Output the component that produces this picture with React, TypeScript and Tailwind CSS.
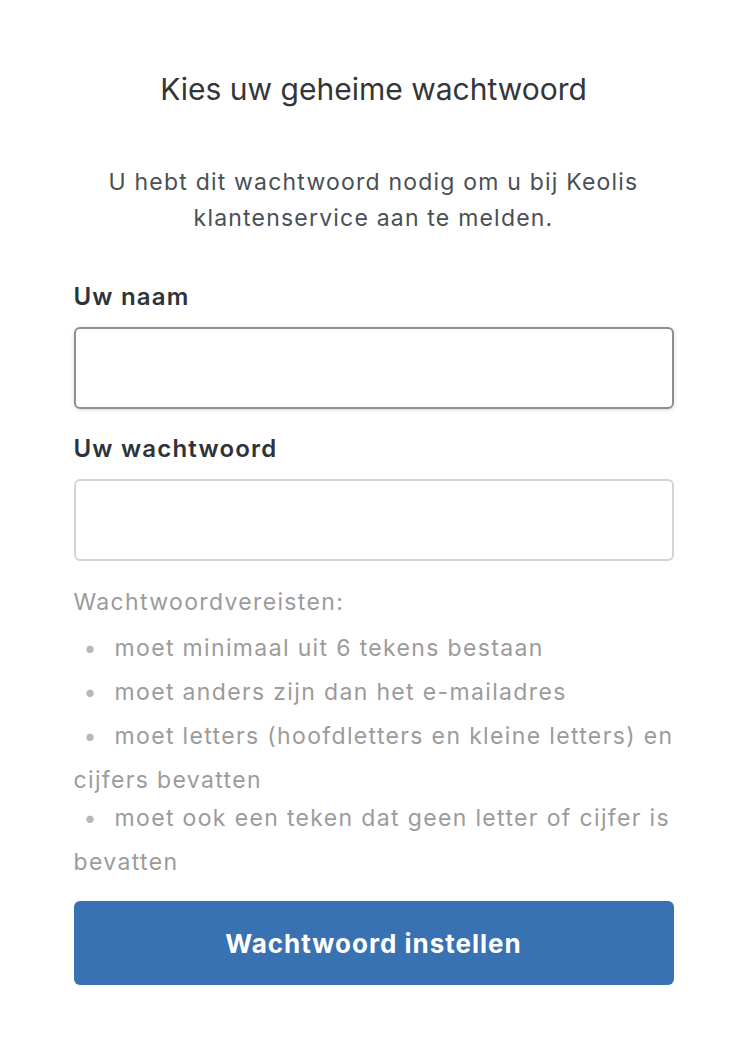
import React from "react";

export default function App() {
  const font = { fontFamily: "Inter, 'Noto Sans', sans-serif" };
  const items = [
    { t: "moet minimaal uit 6 tekens bestaan", wrap: false },
    { t: "moet anders zijn dan het e-mailadres", wrap: false },
    { t: "moet letters (hoofdletters en kleine letters) en cijfers bevatten", wrap: true },
    { t: "moet ook een teken dat geen letter of cijfer is bevatten", wrap: true },
  ];
  return (
    <div className="min-h-[1059px] w-full bg-white" style={font}>
      <div className="mx-auto w-[600px] pt-[70px]">
        <h1 className="text-center text-[30px] leading-[38px] text-[#333639] font-normal">
          Kies uw geheime wachtwoord
        </h1>
        <p className="mt-[56px] text-center text-[23px] leading-[36px] tracking-[1.2px] text-[#4a4f54]">
          U hebt dit wachtwoord nodig om u bij Keolis klantenservice aan te melden.
        </p>
        <label className="mt-[45px] block text-[24px] font-semibold leading-[32px] tracking-[1.2px] text-[#2d3339]">
          Uw naam
        </label>
        <input className="mt-[14px] block h-[82px] w-full rounded-[6px] border-2 border-[#8e8e8e] shadow-[0_1px_4px_rgba(0,0,0,0.15)] outline-none" />
        <label className="mt-[24px] block text-[24px] font-semibold leading-[32px] tracking-[1.2px] text-[#2d3339]">
          Uw wachtwoord
        </label>
        <input type="password" className="mt-[14px] block h-[82px] w-full rounded-[6px] border-2 border-[#d4d4d4] outline-none" />
        <div className="mt-[22px] text-[23px] tracking-[1.35px] text-[#9b9b9b]">
          <div className="leading-[38px]">Wachtwoordvereisten:</div>
          <ul className="mt-[5px]">
            {items.map(({ t, wrap }) => (
              <li
                key={t}
                className={
                  wrap
                    ? "h-[82px] leading-[44px] before:inline-block before:w-[41px] before:pl-[10px] before:text-[#b8b8b8] before:content-['•']"
                    : "leading-[44px] before:inline-block before:w-[41px] before:pl-[10px] before:text-[#b8b8b8] before:content-['•']"
                }
              >
                {t}
              </li>
            ))}
          </ul>
        </div>
        <button className="mt-[23px] block h-[84px] w-full rounded-[6px] bg-[#3872b2] text-[26px] font-bold tracking-[1px] text-white">
          Wachtwoord instellen
        </button>
      </div>
    </div>
  );
}
